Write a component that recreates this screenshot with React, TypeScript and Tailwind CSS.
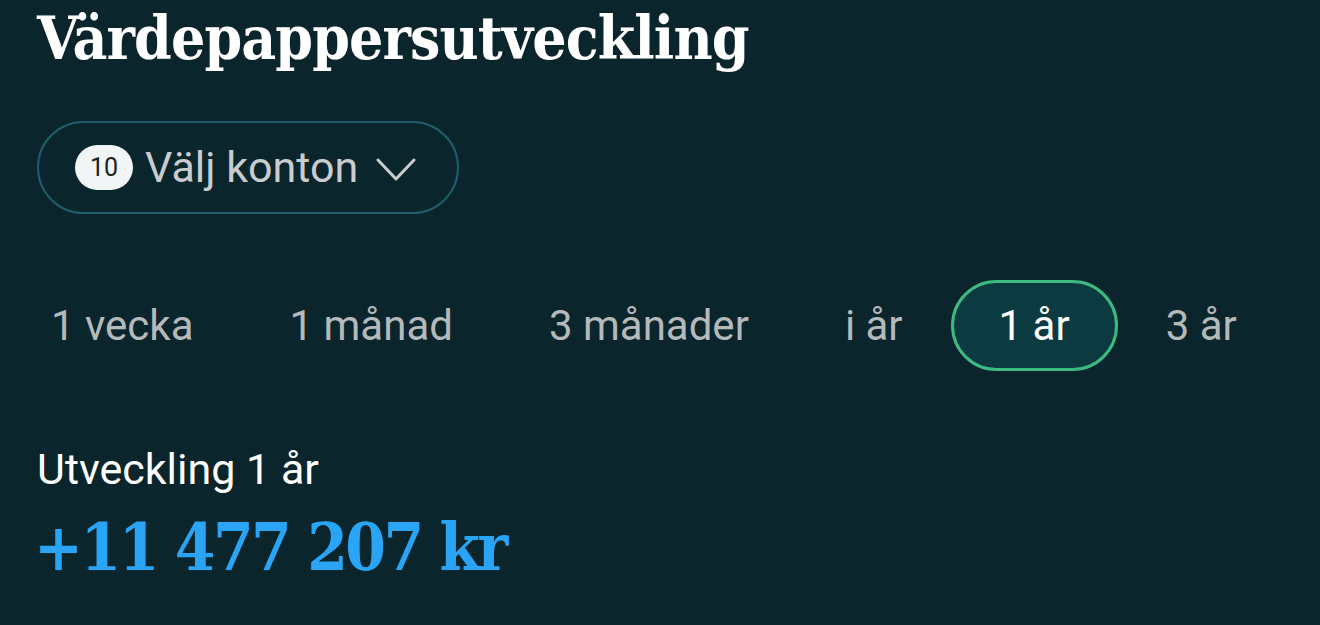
const periods = ['1 vecka', '1 månad', '3 månader', 'i år', '1 år', '3 år'];

export default function App() {
  const selected = '1 år';

  return (
    <div className="w-full h-[625px] overflow-hidden bg-[#0a252b] font-['Roboto',sans-serif]">
      {/* Rubrik */}
      <div className="pl-[37px] pt-[6px]">
        <h1 className="font-['DejaVu_Serif',serif] font-stretch-condensed font-bold text-white text-[60px] leading-[64px] tracking-[-0.9px]">
          Värdepappersutveckling
        </h1>
      </div>

      {/* Kontoväljare */}
      <div className="pl-[37px] mt-[51px]">
        <button
          type="button"
          className="h-[93px] w-[422px] rounded-full border-2 border-[#1e5d69] flex items-center pl-[36px]"
        >
          <span className="h-[45px] w-[58px] rounded-full bg-[#f1f5f6] text-[#1b1f21] text-[25px] flex items-center justify-center">
            10
          </span>
          <span className="ml-[12px] text-[43px] text-[#c9cdcf]">Välj konton</span>
          <svg
            className="ml-[18px] mt-[4px] w-[40px] h-[26px] text-[#c9cdcf]"
            viewBox="0 0 40 26"
            fill="none"
            stroke="currentColor"
            strokeWidth={3}
            strokeLinecap="round"
            strokeLinejoin="round"
          >
            <path d="M2 3 L20 22 L38 3" />
          </svg>
        </button>
      </div>

      {/* Periodval */}
      <div className="pl-[3px] mt-[66px] flex">
        {periods.map((p) => {
          const isActive = p === selected;
          return (
            <div
              key={p}
              className={`h-[91px] px-[45px] rounded-full border-[3px] flex items-center text-[42px] ${
                isActive
                  ? 'border-[#3dba82] bg-[#0c3a41] text-white'
                  : 'border-transparent text-[#b4b9bb]'
              }`}
            >
              {p}
            </div>
          );
        })}
      </div>

      {/* Utveckling */}
      <div className="pl-[37px] mt-[76px]">
        <div className="text-[43px] leading-[44px] text-white">Utveckling 1 år</div>
        <div className="mt-[18px] -ml-[3px] font-['DejaVu_Serif',serif] font-stretch-condensed font-bold text-[65px] leading-[76px] text-[#2aa4f6] tracking-[-2.5px]">
          +11 477 207 kr
        </div>
      </div>
    </div>
  );
}
